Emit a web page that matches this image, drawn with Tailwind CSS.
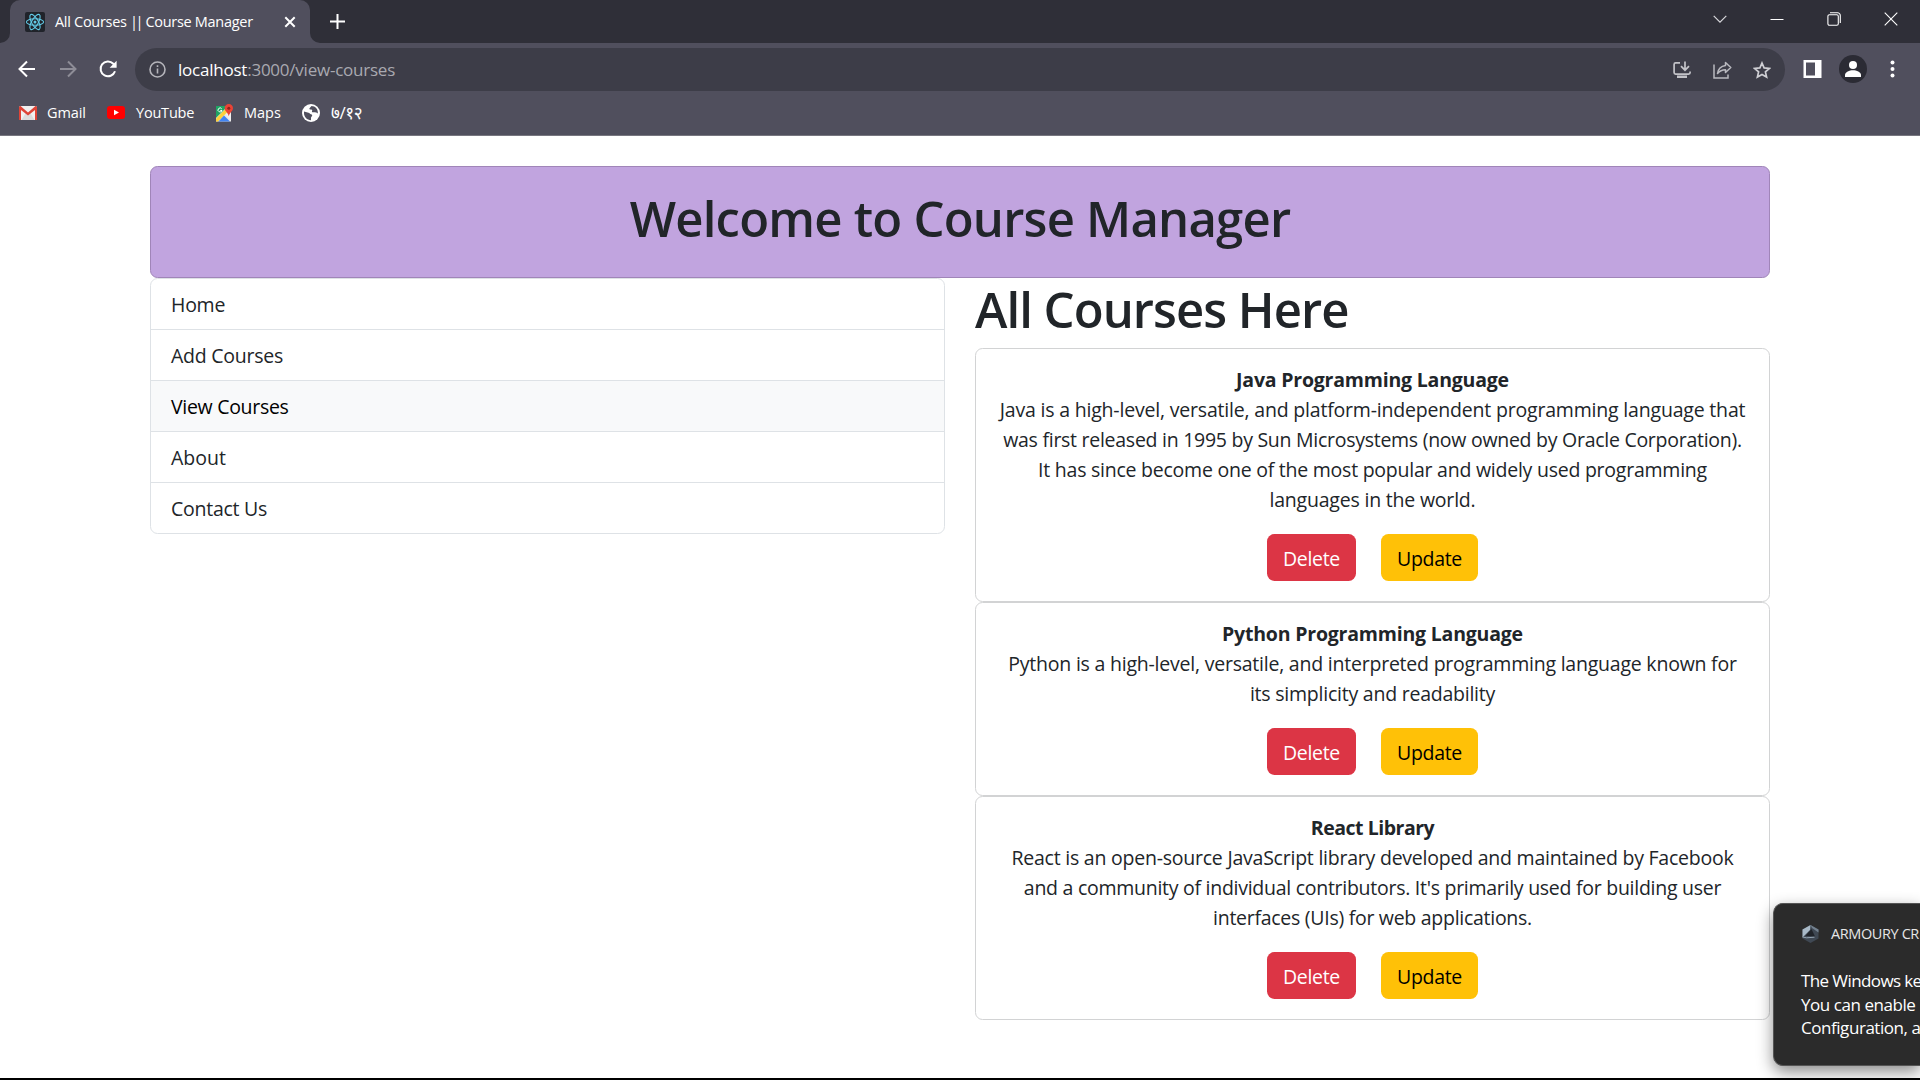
<!DOCTYPE html>
<html lang="en">
<head>
<meta charset="utf-8">
<title>All Courses || Course Manager</title>
<script src="https://cdn.jsdelivr.net/npm/@tailwindcss/browser@4"></script>
</head>
<body class="relative flex h-[1080px] w-[1920px] flex-col overflow-hidden bg-white font-['Open_Sans','Noto_Sans',sans-serif] text-[#212529]">

<!-- Tab strip -->
<header class="flex h-[43px] shrink-0 bg-[#2f2f38] text-white">
  <svg class="mt-auto h-[10px] w-[10px]" viewBox="0 0 10 10"><path d="M10 0v10H0A10 10 0 0 0 10 0z" fill="#504f5d"/></svg>
  <div class="flex h-full w-[300px] items-center rounded-t-[10px] bg-[#504f5d] pl-[15px] pr-[14px]">
    <svg class="h-5 w-5 shrink-0" viewBox="0 0 20 20" fill="none" stroke="#61c9e6" stroke-width="1.1"><rect width="20" height="20" rx="2" fill="#20232a" stroke="none"/><ellipse cx="10" cy="10" rx="8.6" ry="3.3"/><ellipse cx="10" cy="10" rx="8.6" ry="3.3" transform="rotate(60 10 10)"/><ellipse cx="10" cy="10" rx="8.6" ry="3.3" transform="rotate(120 10 10)"/><circle cx="10" cy="10" r="1.5" fill="#61c9e6" stroke="none"/></svg>
    <span class="ml-[10px] whitespace-nowrap text-[14.5px] leading-5 tracking-[-0.3px]">All Courses <span class="tracking-[-2.5px]">||</span> <span class="ml-[1px]">Course Manager</span></span>
    <svg class="ml-auto h-3 w-3" viewBox="0 0 12 12" stroke="#fff" stroke-width="2"><path d="M1.3 1.3l9.4 9.4M10.7 1.3l-9.4 9.4"/></svg>
  </div>
  <svg class="mt-auto h-[10px] w-[10px]" viewBox="0 0 10 10"><path d="M0 0v10h10A10 10 0 0 1 0 0z" fill="#504f5d"/></svg>
  <svg class="ml-[10px] mt-[14px] h-[15px] w-[15px]" viewBox="0 0 15 15" stroke="#fff" stroke-width="2"><path d="M0 7.5h15M7.5 0v15"/></svg>
  <div class="ml-auto flex h-[37px] items-center pr-[22px]">
    <svg class="h-[14px] w-[14px]" viewBox="0 0 14 14" fill="none" stroke="#d8d8dc" stroke-width="1.2"><path d="M.7 3.8L7 10.2l6.300-6.400"/></svg>
    <svg class="ml-[43px] h-[14px] w-[14px]" viewBox="0 0 14 14" stroke="#fff"><path d="M.5 7.500h13"/></svg>
    <svg class="ml-[43px] h-[14px] w-[14px]" viewBox="0 0 14 14" fill="none" stroke="#fff" stroke-width="1.1"><rect x=".9" y="2.800" width="10.400" height="10.400" rx="1.500"/><path d="M3 .8h7.500a2.800 2.800 0 0 1 2.800 2.800V11"/></svg>
    <svg class="ml-[43px] h-[14px] w-[14px]" viewBox="0 0 14 14" stroke="#fff" stroke-width="1.1"><path d="M.7.7l12.600 12.600M13.300.7L.7 13.300"/></svg>
  </div>
</header>

<!-- Toolbar -->
<nav class="flex h-[53px] shrink-0 items-center bg-[#504f5d]">
  <svg class="-mt-[2px] ml-[18px] h-[18px] w-[18px]" viewBox="0 0 18 18" fill="none" stroke="#fff" stroke-width="2"><path d="M17 9H2M9 1.500L1.500 9 9 16.500"/></svg>
  <svg class="-mt-[2px] ml-[23px] h-[18px] w-[18px]" viewBox="0 0 18 18" fill="none" stroke="#8e8d97" stroke-width="2"><path d="M1 9h15M9 1.500L16.500 9 9 16.500"/></svg>
  <svg class="-mt-[2px] ml-[21px] h-5 w-5" viewBox="0 0 20 20" fill="none" stroke="#fff" stroke-width="2"><path d="M17 12.200A7.400 7.400 0 1 1 15.300 4.700l1.400 1.400"/><path d="M18.600 1.800v7h-7z" fill="#fff" stroke="none"/></svg>
  <div class="ml-[17px] flex h-[43px] w-[1650px] items-center rounded-full bg-[#3d3d48] pl-[14px] pr-[14px]">
    <svg class="h-[17px] w-[17px]" viewBox="0 0 17 17" fill="none" stroke="#b5b5bb" stroke-width="1.600"><circle cx="8.500" cy="8.500" r="7.500"/><path d="M8.500 7.500v5M8.500 4.200v1.900"/></svg>
    <span class="ml-[12px] whitespace-nowrap text-[17px] leading-6 tracking-[-0.23px] text-[#a9a9b0]"><span class="text-white">localhost</span>:3000/view-courses</span>
    <svg class="ml-auto h-[18px] w-[18px]" viewBox="0 0 18 18" fill="none" stroke="#c3c3c8" stroke-width="1.700"><path d="M7 1.900H2.600a1.500 1.500 0 0 0-1.500 1.500v8.200a1.500 1.500 0 0 0 1.500 1.500h13a1.500 1.500 0 0 0 1.500-1.500V10.500M12 .5v8M8 5.200l4 4 4-4"/><path d="M4 14.500h10V17H4z" fill="#c3c3c8" stroke="none"/></svg>
    <svg class="ml-[22px] h-[18px] w-[19px]" viewBox="0 0 19 18" fill="none" stroke="#b9b9bf" stroke-width="1.500"><path d="M1 3.500V17h14v-3.500"/><path d="M12.500 1.500l5.300 5-5.300 5V8.700c-3.500 0-5.700 1-8 3.800.6-4 3.500-7.400 8-8z" stroke-linejoin="round"/></svg>
    <svg class="ml-[21px] h-[18px] w-[18px]" viewBox="0 0 18 18" fill="none" stroke="#cfcfd4" stroke-width="1.700"><path d="M9 2l2.100 4.900 5.300.5-4 3.500 1.200 5.200L9 13.400l-4.600 2.700 1.200-5.200-4-3.500 5.300-.5z"/></svg>
  </div>
  <svg class="-mt-[2px] ml-[18px] h-[18px] w-[19px]" viewBox="0 0 19 18"><path fill="#fff" fill-rule="evenodd" d="M.5 0h18v18H.5zM3 2.500v13h9v-13z"/></svg>
  <svg class="-mt-[1px] ml-[17px] h-7 w-7" viewBox="0 0 28 28"><circle cx="14" cy="14" r="14" fill="#2b2b34"/><circle cx="14" cy="10" r="4" fill="#fff"/><path d="M6 22v-2c0-3 4.500-4.700 8-4.700s8 1.700 8 4.700v2z" fill="#fff"/></svg>
  <svg class="-mt-[1px] ml-[23px] h-[18px] w-[5px]" viewBox="0 0 5 18" fill="#fff"><circle cx="2.500" cy="2.500" r="2"/><circle cx="2.500" cy="9" r="2"/><circle cx="2.500" cy="15.500" r="2"/></svg>
</nav>

<!-- Bookmarks -->
<nav class="flex h-10 shrink-0 items-center border-b border-[#77767f] bg-[#504f5d] pb-[6px] text-[14.5px] leading-5 text-white">
  <div class="flex w-[87px] shrink-0 items-center pl-[19px]">
    <svg class="h-[14px] w-[18px] shrink-0" viewBox="0 0 18 14"><rect width="18" height="14" rx="1.500" fill="#f1f0f0"/><path d="M2.500 14L7 6.500h4l4.500 7.500z" fill="#dcdcdc"/><path d="M0 14V1.500C0 .6.6 0 1.500 0L9 6.500 16.500 0c.9 0 1.500.6 1.500 1.500V14h-2V4L9 9.500 2 4v10z" fill="#de4437"/></svg>
    <span class="ml-[10px] tracking-[-0.1px]">Gmail</span>
  </div>
  <div class="ml-5 flex w-[90px] shrink-0 items-center">
    <svg class="h-[13px] w-[18px] shrink-0" viewBox="0 0 18 13"><rect width="18" height="13" rx="3" fill="#f00"/><path d="M7 3.700v5.600l5-2.800z" fill="#fff"/></svg>
    <span class="ml-[11px] tracking-[-0.2px]">YouTube</span>
  </div>
  <div class="ml-[18px] flex w-[66px] shrink-0 items-center">
    <svg class="h-[18px] w-[19px] shrink-0" viewBox="0 0 19 18"><path d="M1 2h15v15.500H1z" fill="#e8e8e8"/><path d="M1 2h12L1 14z" fill="#1fa463"/><path d="M1 14.500L12.500 3 15 5.500 3 17.500H1z" fill="#fdd13c"/><path d="M3.500 17.500L9 11.500l6 6z" fill="#4285f4"/><path d="M10.500 10l5.500-3v10z" fill="#efefef"/><path d="M13.800 0a4.200 4.200 0 0 1 4.200 4.200c0 3-3.300 3.800-4.200 8-.9-4.200-4.200-5-4.200-8A4.200 4.200 0 0 1 13.800 0z" fill="#ea4335"/><circle cx="13.800" cy="4.200" r="1.500" fill="#8c231c"/><path d="M6.700 4.800a2 2 0 1 0 .3 1.700H5.300" stroke="#fff" fill="none"/></svg>
    <span class="ml-[10px]">Maps</span>
  </div>
  <div class="ml-[21px] flex items-center">
    <svg class="h-[18px] w-[18px] shrink-0" viewBox="0 0 18 18"><circle cx="9" cy="9" r="9" fill="#fff"/><path d="M2 7.500l4.500 1.200c1.200.4 1.300 1.300 2.500 1.500 1 .3 1.600.8 1 1.800l-1 1.600v2.600C5 16 2 13 2 9zM9.500 2l-2 2.300c-.5.900.5 1.300 1.500 1.200 1.200-.1 1.500.7 1 1.700-.3 1 .7 1.300 2 1.100 1.600-.2 2.600.2 3.800 1.200.7-4-2.500-7.500-6.300-7.500z" fill="#504f5d"/></svg>
    <span class="ml-[11px] text-[17px] tracking-[-0.4px]">७/१२</span>
  </div>
</nav>

<!-- Page -->
<main class="mx-auto flex w-[1620px] grow flex-col pt-[30px] text-[19.5px] leading-[30px]">
  <section class="h-28 rounded-[7.5px] border border-[#a085b8] bg-[#c1a4df] pt-[21px] text-center">
    <h1 class="text-[49px] font-[550] leading-[60px] tracking-[-0.77px]">Welcome to Course Manager</h1>
  </section>
  <div class="grid grid-cols-2 items-start gap-[30px]">
    <ul class="divide-y divide-[#dee2e6] overflow-hidden rounded-[7.5px] border border-[#dee2e6]">
      <li class="h-[51px] px-5 pt-[11px] tracking-[-0.25px]">Home</li>
      <li class="h-[51px] px-5 pt-[11px] tracking-[-0.25px]">Add Courses</li>
      <li class="h-[51px] bg-[#f8f9fa] px-5 pt-[11px] tracking-[-0.3px] text-black">View Courses</li>
      <li class="h-[51px] px-5 pt-[11px]">About</li>
      <li class="h-[50px] px-5 pt-[11px] tracking-[-0.25px]">Contact Us</li>
    </ul>
    <section>
      <h2 class="h-[70px] pt-[1px] text-[49px] font-[550] leading-[60px] tracking-[-0.96px]">All Courses Here</h2>
      <article class="flex h-[254px] flex-col items-center whitespace-nowrap rounded-[7.5px] border border-[#d2d3d4] pt-4">
        <h3 class="font-bold tracking-[-0.2px]">Java Programming Language</h3>
        <p class="text-center"><span class="tracking-[-0.19px]">Java is a high-level, versatile, and platform-independent programming language that</span><br><span class="tracking-[-0.27px]">was first released in 1995 by Sun Microsystems (now owned by Oracle Corporation).</span><br><span class="tracking-[-0.24px]">It has since become one of the most popular and widely used programming</span><br><span class="tracking-[-0.2px]">languages in the world.</span></p>
        <div class="mt-[19px] flex gap-[25px]">
          <button class="h-[47px] w-[89px] rounded-[7.5px] bg-[#dc3545] pt-[3px] tracking-[-0.3px] text-white">Delete</button>
          <button class="h-[47px] w-[97px] rounded-[7.5px] bg-[#ffc107] pt-[3px] tracking-[-0.3px] text-black">Update</button>
        </div>
      </article>
      <article class="flex h-[194px] flex-col items-center whitespace-nowrap rounded-[7.5px] border border-[#d2d3d4] pt-4">
        <h3 class="font-bold tracking-[-0.2px]">Python Programming Language</h3>
        <p class="text-center"><span class="tracking-[-0.22px]">Python is a high-level, versatile, and interpreted programming language known for</span><br><span class="tracking-[-0.23px]">its simplicity and readability</span></p>
        <div class="mt-[19px] flex gap-[25px]">
          <button class="h-[47px] w-[89px] rounded-[7.5px] bg-[#dc3545] pt-[3px] tracking-[-0.3px] text-white">Delete</button>
          <button class="h-[47px] w-[97px] rounded-[7.5px] bg-[#ffc107] pt-[3px] tracking-[-0.3px] text-black">Update</button>
        </div>
      </article>
      <article class="flex h-[224px] flex-col items-center whitespace-nowrap rounded-[7.5px] border border-[#d2d3d4] pt-4">
        <h3 class="font-bold tracking-[-0.48px]">React Library</h3>
        <p class="text-center"><span class="tracking-[-0.23px]">React is an open-source JavaScript library developed and maintained by Facebook</span><br><span class="tracking-[-0.27px]">and a community of individual contributors. It's primarily used for building user</span><br><span class="tracking-[-0.28px]">interfaces (UIs) for web applications.</span></p>
        <div class="mt-[19px] flex gap-[25px]">
          <button class="h-[47px] w-[89px] rounded-[7.5px] bg-[#dc3545] pt-[3px] tracking-[-0.3px] text-white">Delete</button>
          <button class="h-[47px] w-[97px] rounded-[7.5px] bg-[#ffc107] pt-[3px] tracking-[-0.3px] text-black">Update</button>
        </div>
      </article>
    </section>
  </div>
</main>

<!-- Top edge of the hidden taskbar -->
<footer class="h-[2px] shrink-0 bg-black"></footer>

<!-- System notification sliding in -->
<aside class="absolute right-0 top-[903px] h-[163px] w-[147px] overflow-hidden rounded-l-[10px] border border-r-0 border-[#555] bg-[#2b2b2b] pl-[27px] pt-5 text-white shadow-[0_6px_16px_rgba(0,0,0,0.45)]">
  <div class="flex items-center gap-3 pl-[1px]">
    <svg class="h-[18px] w-[17px] shrink-0" viewBox="0 0 17 18"><path d="M8.500 0l8 4.500v9l-8 4.500-8-4.500v-9z" fill="#3f4853"/><path d="M8.500 0L.5 4.500v8L8 5z" fill="#a9bac8"/><path d="M8.500 0l8 4.500v3L10 3z" fill="#73818f"/><path d="M9.500 4L13 11.500l-9.500-.8z" fill="#20242a"/><path d="M.5 12l4 .8 8-.6" stroke="#93a3b1" fill="none"/></svg>
    <span class="whitespace-nowrap text-[14.500px] leading-5 tracking-[-0.4px] text-[#e6e6e6]">ARMOURY CR</span>
  </div>
  <p class="mt-[25px] whitespace-nowrap text-[17px] leading-[23.500px] tracking-[-0.45px]"><span class="tracking-[-0.6px]">The Windows ke</span><br>You can enable<br>Configuration, a</p>
</aside>
</body>
</html>
